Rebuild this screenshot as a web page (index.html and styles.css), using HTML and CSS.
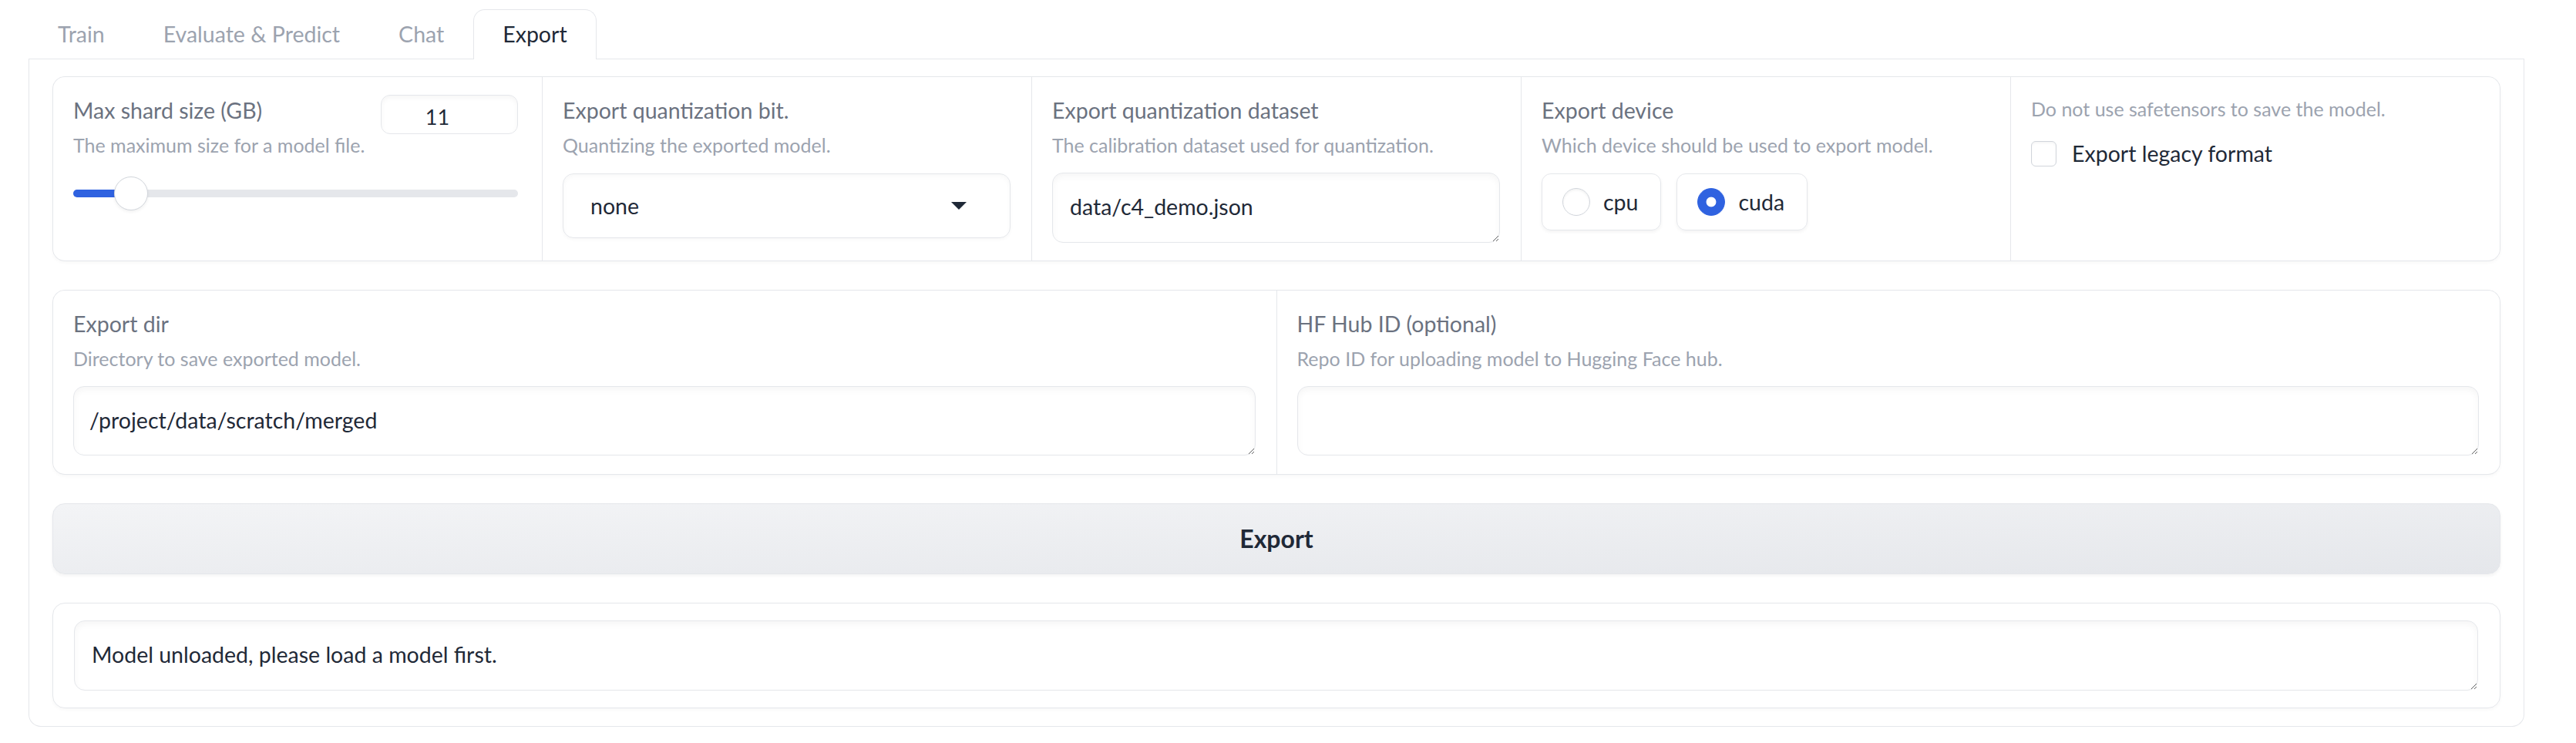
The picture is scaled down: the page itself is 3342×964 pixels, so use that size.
FILE: index.html
```html
<!DOCTYPE html>
<html lang="en">
<head>
<meta charset="utf-8">
<title>Export</title>
<link rel="stylesheet" href="styles.css">
</head>
<body>
<div class="app">
  <div class="tab-nav">
    <div class="tab">Train</div>
    <div class="tab">Evaluate &amp; Predict</div>
    <div class="tab">Chat</div>
    <div class="tab active">Export</div>
  </div>
  <div class="panel">
    <div class="form five">
      <div class="cell">
        <div class="head">
          <div class="head-text">
            <div class="label">Max shard size (GB)</div>
            <div class="info">The maximum size for a model file.</div>
          </div>
          <div class="number">11</div>
        </div>
        <div class="slider">
          <div class="track"><div class="fill"></div><div class="thumb"></div></div>
        </div>
      </div>
      <div class="cell">
        <div class="label">Export quantization bit.</div>
        <div class="info">Quantizing the exported model.</div>
        <div class="dropdown">
          <span>none</span>
          <svg class="caret" width="20" height="10" viewBox="0 0 20 10"><polygon points="0,0 20,0 10,10" fill="#1f2937"/></svg>
        </div>
      </div>
      <div class="cell">
        <div class="label">Export quantization dataset</div>
        <div class="info">The calibration dataset used for quantization.</div>
        <textarea class="field" rows="1" readonly>data/c4_demo.json</textarea>
      </div>
      <div class="cell">
        <div class="label">Export device</div>
        <div class="info">Which device should be used to export model.</div>
        <div class="radios">
          <div class="radio"><span class="dot"></span><span>cpu</span></div>
          <div class="radio"><span class="dot on"></span><span>cuda</span></div>
        </div>
      </div>
      <div class="cell">
        <div class="info top">Do not use safetensors to save the model.</div>
        <div class="check"><span class="box"></span><span>Export legacy format</span></div>
      </div>
    </div>
    <div class="form two">
      <div class="cell">
        <div class="label">Export dir</div>
        <div class="info">Directory to save exported model.</div>
        <textarea class="field wide" rows="1" readonly>/project/data/scratch/merged</textarea>
      </div>
      <div class="cell">
        <div class="label">HF Hub ID (optional)</div>
        <div class="info">Repo ID for uploading model to Hugging Face hub.</div>
        <textarea class="field wide" rows="1" readonly></textarea>
      </div>
    </div>
    <button class="btn">Export</button>
    <div class="output">
      <textarea class="field out" rows="1" readonly>Model unloaded, please load a model first.</textarea>
    </div>
  </div>
</div>
</body>
</html>
```

FILE: styles.css
```css
* { box-sizing: border-box; }

body {
  margin: 0;
  background: #ffffff;
  font-family: Lato, "Noto Sans", sans-serif;
  color: #1f2937;
}

.app {
  margin-left: 37px;
  width: 3238px;
  padding-top: 12px;
}

.tab-nav {
  display: flex;
  height: 65px;
  border-bottom: 1px solid #e5e7eb;
}

.tab {
  height: 65px;
  padding: 11px 37px 0;
  border: 1px solid transparent;
  border-bottom: none;
  border-radius: 15px 15px 0 0;
  font-size: 28.5px;
  line-height: 40px;
  color: #9ca3af;
  white-space: nowrap;
}

.tab.active {
  border-color: #e5e7eb;
  background: #ffffff;
  color: #1f2937;
}

.panel {
  border: 1px solid #e5e7eb;
  border-top: none;
  border-radius: 0 0 16px 16px;
  padding: 22px 30px 23px;
  display: flex;
  flex-direction: column;
  gap: 37px;
}

.form {
  display: grid;
  gap: 1px;
  background: #e5e7eb;
  border: 1px solid #e5e7eb;
  border-radius: 16px;
  overflow: hidden;
  height: 240px;
  box-shadow: 0 2px 4px rgba(0, 0, 0, 0.03);
}

.form.five { grid-template-columns: repeat(5, 1fr); }
.form.two { grid-template-columns: repeat(2, 1fr); }

.cell {
  background: #ffffff;
  padding: 23px 27px 0 26px;
  display: flex;
  flex-direction: column;
  min-width: 0;
}

.label {
  font-size: 28.5px;
  line-height: 40px;
  color: #6b7280;
  white-space: nowrap;
}

.info {
  margin-top: 8px;
  font-size: 25px;
  line-height: 34px;
  color: #9ca3af;
  white-space: nowrap;
}

.info.top { margin-top: 1px; }

.head {
  display: flex;
  justify-content: space-between;
  align-items: flex-start;
}

.number {
  width: 178px;
  height: 51px;
  margin-right: 4px;
  border: 1px solid #e5e7eb;
  border-radius: 12px;
  box-shadow: inset 0 3px 6px rgba(0, 0, 0, 0.04);
  font-size: 27px;
  line-height: 55px;
  text-align: center;
  padding-right: 31px;
  color: #1f2937;
}

.slider {
  margin-top: 24px;
  height: 44px;
  display: flex;
  align-items: center;
  padding-right: 4px;
}

.track {
  position: relative;
  flex: 1;
  height: 10px;
  border-radius: 5px;
  background: #e5e7eb;
}

.fill {
  width: 70px;
  height: 10px;
  border-radius: 5px;
  background: #2f62e0;
}

.thumb {
  position: absolute;
  left: 53px;
  top: -17px;
  width: 44px;
  height: 44px;
  border-radius: 50%;
  background: #ffffff;
  border: 1px solid #d1d5db;
  box-shadow: 0 2px 4px rgba(0, 0, 0, 0.06);
}

.dropdown {
  margin-top: 20px;
  height: 84px;
  border: 1px solid #e5e7eb;
  border-radius: 14px;
  box-shadow: inset 0 3px 6px rgba(0, 0, 0, 0.03), 0 2px 4px rgba(0, 0, 0, 0.03);
  display: flex;
  align-items: center;
  justify-content: space-between;
  padding: 0 56px 0 35px;
  font-size: 28.5px;
  line-height: 40px;
  color: #1f2937;
}

.field {
  display: block;
  width: 100%;
  margin: 19px 0 0;
  height: 91px;
  padding: 23px 22px 0;
  border: 1px solid #e5e7eb;
  border-radius: 14px;
  background: #ffffff;
  box-shadow: inset 0 4px 8px rgba(0, 0, 0, 0.04);
  font-family: Lato, "Noto Sans", sans-serif;
  font-size: 28.5px;
  line-height: 40px;
  color: #1f2937;
  resize: vertical;
  overflow: hidden;
  outline: none;
}

.field.wide {
  height: 90px;
  padding-left: 20px;
}

.radios {
  margin-top: 20px;
  display: flex;
  gap: 20px;
}

.radio {
  height: 74px;
  display: flex;
  align-items: center;
  gap: 17px;
  padding: 0 29px 0 26px;
  border: 1px solid #e5e7eb;
  border-radius: 12px;
  box-shadow: 0 2px 4px rgba(0, 0, 0, 0.05);
  font-size: 28.5px;
  line-height: 40px;
  color: #1f2937;
}

.dot {
  width: 36px;
  height: 36px;
  border-radius: 50%;
  border: 1px solid #d1d5db;
  background: #ffffff;
  box-shadow: inset 0 2px 3px rgba(0, 0, 0, 0.05);
}

.dot.on {
  border-color: #2f62e0;
  background: radial-gradient(circle, #ffffff 0 6px, #2f62e0 6.8px);
  box-shadow: none;
}

.check {
  margin-top: 21px;
  display: flex;
  align-items: center;
  gap: 20px;
  font-size: 28.5px;
  line-height: 40px;
  color: #1f2937;
}

.box {
  width: 33px;
  height: 33px;
  border: 1px solid #d1d5db;
  border-radius: 6px;
  background: #ffffff;
  box-shadow: inset 0 2px 3px rgba(0, 0, 0, 0.04);
}

.btn {
  height: 92px;
  border: 1px solid #e5e7eb;
  border-radius: 16px;
  background: linear-gradient(to bottom right, #f3f4f6, #e5e7eb);
  box-shadow: 0 2px 4px rgba(0, 0, 0, 0.05);
  font-family: Lato, "Noto Sans", sans-serif;
  font-size: 32px;
  font-weight: 700;
  line-height: 44px;
  color: #1f2937;
  padding: 0;
}

.output {
  height: 137px;
  border: 1px solid #e5e7eb;
  border-radius: 16px;
  padding: 22px 28px 0 27px;
  box-shadow: 0 2px 4px rgba(0, 0, 0, 0.03);
}

.field.out {
  margin: 0;
  height: 91px;
}
```
